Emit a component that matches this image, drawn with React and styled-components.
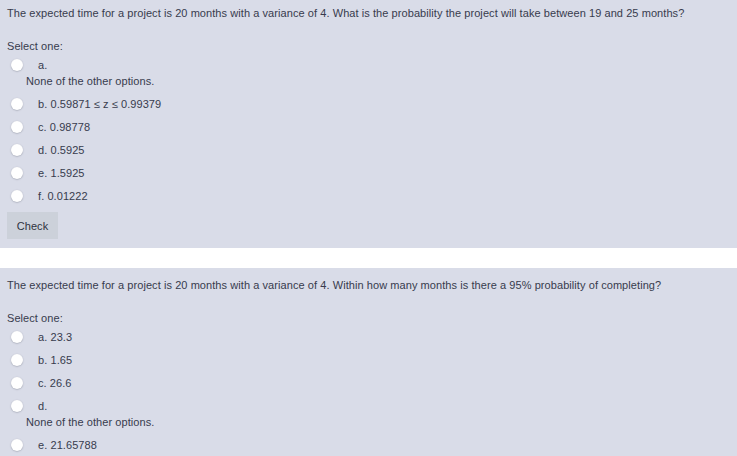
import React from 'react'
import styled, { createGlobalStyle } from 'styled-components'

const Global = createGlobalStyle`
  html, body {
    margin: 0;
    padding: 0;
    background: #ffffff;
  }
  body {
    font-family: "Liberation Sans", Arial, Helvetica, sans-serif;
    font-size: 11px;
    letter-spacing: 0.07px;
    color: #373b4d;
  }
`

const Page = styled.div`
  width: 737px;
  height: 456px;
  overflow: hidden;
  display: flex;
  flex-direction: column;
  gap: 20px;
`

const Panel = styled.section`
  background: #d9dce8;
  padding: ${p => p.$top}px 7px 9px 7px;
`

const Question = styled.p`
  margin: 0;
  line-height: 16px;
`

const Prompt = styled.p`
  margin: 17px 0 3px 0;
  line-height: 16px;
`

const Options = styled.div`
  display: flex;
  flex-direction: column;
  gap: 7px;
`

const Option = styled.div`
  padding-left: 19px;
  line-height: 16px;
`

const Head = styled.label`
  display: flex;
  align-items: center;
  margin-left: -15px;
  height: 16px;
`

const Radio = styled.span`
  display: inline-block;
  width: 12px;
  height: 12px;
  border-radius: 50%;
  background: #ffffff;
  box-shadow: 0 0.5px 1.5px rgba(40, 45, 60, 0.35);
  flex: none;
`

const Letter = styled.span`
  margin-left: 15px;
`

const Extra = styled.div`
  line-height: 16px;
`

const Button = styled.button`
  margin-top: 8px;
  height: 27px;
  width: 51px;
  border: none;
  border-radius: 0;
  background: #ccd1da;
  color: #2f3340;
  font-family: "Liberation Sans", Arial, sans-serif;
  font-size: 11px;
  letter-spacing: 0.07px;
  padding: 0;
`

const q1 = [
  { key: 'a.', extra: 'None of the other options.' },
  { key: 'b. 0.59871 ≤ z ≤ 0.99379' },
  { key: 'c. 0.98778' },
  { key: 'd. 0.5925' },
  { key: 'e. 1.5925' },
  { key: 'f. 0.01222' },
]

const q2 = [
  { key: 'a. 23.3' },
  { key: 'b. 1.65' },
  { key: 'c. 26.6' },
  { key: 'd.', extra: 'None of the other options.' },
  { key: 'e. 21.65788' },
]

function Choices({ items }) {
  return (
    <Options>
      {items.map(o => (
        <Option key={o.key}>
          <Head>
            <Radio />
            <Letter>{o.key}</Letter>
          </Head>
          {o.extra && <Extra>{o.extra}</Extra>}
        </Option>
      ))}
    </Options>
  )
}

export default function App() {
  return (
    <Page>
      <Global />
      <Panel $top={5}>
        <Question>
          The expected time for a project is 20 months with a variance of 4. What is the probability the project will take between 19 and 25 months?
        </Question>
        <Prompt>Select one:</Prompt>
        <Choices items={q1} />
        <Button>Check</Button>
      </Panel>
      <Panel $top={9}>
        <Question>
          The expected time for a project is 20 months with a variance of 4. Within how many months is there a 95% probability of completing?
        </Question>
        <Prompt>Select one:</Prompt>
        <Choices items={q2} />
      </Panel>
    </Page>
  )
}
